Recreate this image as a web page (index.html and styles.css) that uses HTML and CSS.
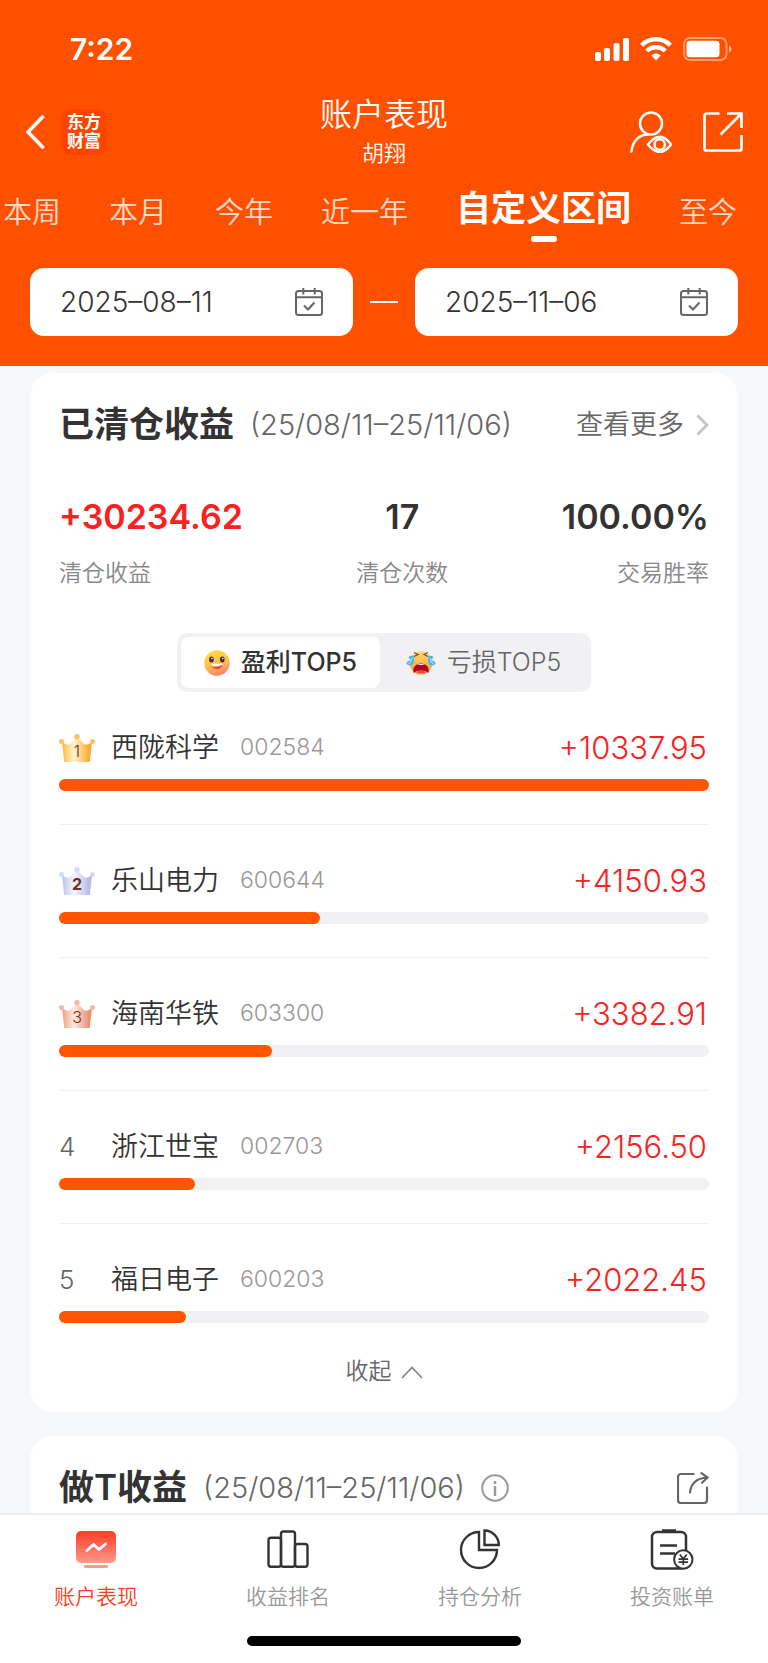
FILE: index.html
```
<!DOCTYPE html>
<html lang="zh-CN">
<head>
    <meta charset="UTF-8">
    <meta name="viewport" content="width=device-width, initial-scale=1.0">
    <title>账户表现</title>
    <link rel="stylesheet" href="styles.css">
</head>
<body>
    <div class="app">
        <!-- Orange Header -->
        <header class="header">
            <div class="status-bar">
                <span class="time">7:22</span>
                <div class="status-icons">
                    <svg width="34" height="23" viewBox="0 0 34 23" fill="#fff">
                        <rect x="0" y="14" width="6" height="9" rx="2"/>
                        <rect x="9" y="10" width="6" height="13" rx="2"/>
                        <rect x="18.500" y="5" width="6" height="18" rx="2"/>
                        <rect x="28" y="0" width="6" height="23" rx="2"/>
                    </svg>
                    <svg width="32" height="24" viewBox="0 0 32 24" fill="none" stroke="#fff" stroke-width="4.400">
                        <path d="M1.600 8.200a20.500 20.500 0 0 1 28.800 0"/>
                        <path d="M6.800 14a13 13 0 0 1 18.400 0"/>
                        <path d="M11.200 18.600a6.600 6.600 0 0 1 9.600 0L16 23.400z" fill="#fff" stroke="none"/>
                    </svg>
                    <svg width="49" height="24" viewBox="0 0 49 24">
                        <rect x="1" y="1" width="42.500" height="22" rx="6" fill="none" stroke="#fff" stroke-opacity=".45" stroke-width="1.800"/>
                        <rect x="3.500" y="3.800" width="33" height="16.400" rx="3.500" fill="#fff"/>
                        <path d="M46 8.500c3.300 1 3.300 6 0 7z" fill="#fff" fill-opacity=".5"/>
                    </svg>
                </div>
            </div>

            <div class="nav-bar">
                <div class="nav-left">
                    <button class="icon-button" aria-label="返回">
                        <svg width="20" height="34" viewBox="0 0 20 34" fill="none" stroke="#fff" stroke-width="3.600" stroke-linecap="round" stroke-linejoin="round"><path d="M17.500 2L3 17l14.500 15"/></svg>
                    </button>
                    <span class="logo">东方<br>财富</span>
                </div>
                <div class="nav-title">
                    <h1>账户表现</h1>
                    <p>胡翔</p>
                </div>
                <div class="nav-right">
                    <button class="icon-button" aria-label="账户查看">
                        <svg width="42" height="42" viewBox="0 0 42 42" fill="none" stroke="#fff" stroke-width="2.500" stroke-linecap="round">
                            <circle cx="21" cy="12.500" r="11"/>
                            <path d="M1.500 40.500C2.500 30 9 23.500 18 23.400"/>
                            <path d="M18 33.500q12-15.500 23 0-11 15-23 0z" stroke-linejoin="round"/>
                            <circle cx="29.700" cy="33.500" r="5.200"/>
                        </svg>
                    </button>
                    <button class="icon-button" aria-label="分享">
                        <svg width="40" height="40" viewBox="0 0 40 40" fill="none" stroke="#fff" stroke-width="2.700">
                            <path d="M16.500 1.500H3.500a2 2 0 0 0-2 2V36.500a2 2 0 0 0 2 2H36.500a2 2 0 0 0 2-2V23"/>
                            <path d="M24 1.500h14.500V16M37.500 2.500L17.500 22.500"/>
                        </svg>
                    </button>
                </div>
            </div>

            <nav class="period-tabs">
                <button class="period">本周</button>
                <button class="period">本月</button>
                <button class="period">今年</button>
                <button class="period">近一年</button>
                <button class="period active">自定义区间</button>
                <button class="period">至今</button>
            </nav>

            <div class="date-range">
                <label class="date-box">
                    <input type="text" value="2025–08–11" aria-label="开始日期">
                    <svg width="28" height="28" viewBox="0 0 28 28" fill="none" stroke="#666" stroke-width="2">
                        <rect x="1" y="3" width="26" height="24" rx="2.500"/>
                        <path d="M1 9.300h26M8.300 0v6.500M19.700 0v6.500M9 17.500l4 4 6.500-7"/>
                    </svg>
                </label>
                <span class="range-line"></span>
                <label class="date-box">
                    <input type="text" value="2025–11–06" aria-label="结束日期">
                    <svg width="28" height="28" viewBox="0 0 28 28" fill="none" stroke="#666" stroke-width="2">
                        <rect x="1" y="3" width="26" height="24" rx="2.500"/>
                        <path d="M1 9.300h26M8.300 0v6.500M19.700 0v6.500M9 17.500l4 4 6.500-7"/>
                    </svg>
                </label>
            </div>
        </header>

        <main class="content">
            <!-- Closed Positions -->
            <section class="card">
                <div class="card-head">
                    <h2>已清仓收益</h2>
                    <span class="card-range">(25/08/11–25/11/06)</span>
                    <a class="more" href="#">查看更多
                        <svg width="13" height="22" viewBox="0 0 13 22" fill="none" stroke="#c4c4c4" stroke-width="2.800"><path d="M1.500 1.500L11 11l-9.500 9.500"/></svg>
                    </a>
                </div>

                <div class="stats">
                    <div class="stat">
                        <strong class="up">+30234.62</strong>
                        <span>清仓收益</span>
                    </div>
                    <div class="stat">
                        <strong>17</strong>
                        <span>清仓次数</span>
                    </div>
                    <div class="stat">
                        <strong>100.00%</strong>
                        <span>交易胜率</span>
                    </div>
                </div>

                <div class="switch">
                    <button class="switch-item selected">
                        <svg width="26" height="26" viewBox="0 0 26 26">
                            <defs>
                                <linearGradient id="smile" x1="0" y1="0" x2=".3" y2="1">
                                    <stop offset="0" stop-color="#ffe04a"/>
                                    <stop offset=".6" stop-color="#ffc04c"/>
                                    <stop offset="1" stop-color="#ff8a68"/>
                                </linearGradient>
                            </defs>
                            <circle cx="13" cy="13" r="12.700" fill="url(#smile)"/>
                            <ellipse cx="7.500" cy="9.500" rx="2.300" ry="2.900" fill="#4a2b36"/>
                            <ellipse cx="18.300" cy="9.500" rx="2.300" ry="2.900" fill="#4a2b36"/>
                            <circle cx="8" cy="8.500" r=".8" fill="#fff"/>
                            <circle cx="18.800" cy="8.500" r=".8" fill="#fff"/>
                            <path d="M7.500 13.500q5.500 1.400 11-.5-.3 6-5.300 6.200-5 0-5.700-5.700z" fill="#ea4b38"/>
                            <path d="M7.500 13.200q5.500 1.400 11-.4v2q-5 3-10.500.9z" fill="#fff"/>
                        </svg>
                        盈利TOP5
                    </button>
                    <button class="switch-item">
                        <svg width="30" height="26" viewBox="0 0 30 26">
                            <defs>
                                <linearGradient id="cry" x1="0" y1="0" x2="0" y2="1">
                                    <stop offset="0" stop-color="#ffd866"/>
                                    <stop offset="1" stop-color="#ee9a3c"/>
                                </linearGradient>
                            </defs>
                            <circle cx="15" cy="13" r="11.500" fill="url(#cry)"/>
                            <path d="M8 2.500l4 2-4 2M22 2.500l-4 2 4 2" fill="none" stroke="#70502f" stroke-width="1.300"/>
                            <path d="M7.500 23q-1.500-9 7.500-9.500 9 .5 7.500 9.500l-3-2h-9z" fill="#ad0820"/>
                            <path d="M11 15q4-2 8 0z" fill="#fff"/>
                            <path d="M10.500 22q4.500-4 9 0l-1 1h-7z" fill="#ee4258"/>
                            <path d="M7.500 6Q3 5 2.500 8q3 1 2 2.500-4.500.5-4 3.500 4 3 6.500 0 1.500-3 .5-8zM22.500 6Q27 5 27.500 8q-3 1-2 2.500 4.500.5 4 3.500-4 3-6.500 0-1.500-3-.5-8z" fill="#42b5f4"/>
                            <path d="M6 8q-.5 4-3.500 6M24 8q.5 4 3.500 6" fill="none" stroke="#a6e4ff" stroke-width="1.100"/>
                        </svg>
                        亏损TOP5
                    </button>
                </div>

                <ol class="ranking">
                    <li>
                        <div class="stock">
                            <span class="rank">
                                <svg width="36" height="28" viewBox="0 0 36 28">
                                    <defs>
                                        <linearGradient id="gold">
                                            <stop offset="0" stop-color="#fbb938"/>
                                            <stop offset=".4" stop-color="#fff2d4"/>
                                            <stop offset=".9" stop-color="#f9ad30"/>
                                        </linearGradient>
                                    </defs>
                                    <path d="M3 8q5 4 8 2l7-7 7 7q3 2 8-2l-2.200 20H5.200z" fill="url(#gold)"/>
                                    <g fill="#fcc35a"><circle cx="2.500" cy="7.500" r="2.500"/><circle cx="18" cy="2.800" r="2.700"/><circle cx="33.500" cy="7.500" r="2.500"/></g>
                                    <text x="18" y="23" class="crown-number">1</text>
                                </svg>
                            </span>
                            <span class="name">西陇科学</span>
                            <span class="code">002584</span>
                            <span class="profit">+10337.95</span>
                        </div>
                        <div class="bar"><div class="bar-fill" style="width: 100%"></div></div>
                    </li>
                    <li>
                        <div class="stock">
                            <span class="rank">
                                <svg width="36" height="28" viewBox="0 0 36 28">
                                    <defs>
                                        <linearGradient id="silver">
                                            <stop offset="0" stop-color="#b9c1ea"/>
                                            <stop offset=".4" stop-color="#f5f6fc"/>
                                            <stop offset=".9" stop-color="#b7bce9"/>
                                        </linearGradient>
                                    </defs>
                                    <path d="M3 8q5 4 8 2l7-7 7 7q3 2 8-2l-2.200 20H5.200z" fill="url(#silver)"/>
                                    <g fill="#d5d9f4"><circle cx="2.500" cy="7.500" r="2.500"/><circle cx="18" cy="2.800" r="2.700"/><circle cx="33.500" cy="7.500" r="2.500"/></g>
                                    <text x="18" y="23" class="crown-number bold">2</text>
                                </svg>
                            </span>
                            <span class="name">乐山电力</span>
                            <span class="code">600644</span>
                            <span class="profit">+4150.93</span>
                        </div>
                        <div class="bar"><div class="bar-fill" style="width: 40.2%"></div></div>
                    </li>
                    <li>
                        <div class="stock">
                            <span class="rank">
                                <svg width="36" height="28" viewBox="0 0 36 28">
                                    <defs>
                                        <linearGradient id="bronze">
                                            <stop offset="0" stop-color="#f0a083"/>
                                            <stop offset=".4" stop-color="#fdeae2"/>
                                            <stop offset=".9" stop-color="#ea9273"/>
                                        </linearGradient>
                                    </defs>
                                    <path d="M3 8q5 4 8 2l7-7 7 7q3 2 8-2l-2.200 20H5.200z" fill="url(#bronze)"/>
                                    <g fill="#f6b8a2"><circle cx="2.500" cy="7.500" r="2.500"/><circle cx="18" cy="2.800" r="2.700"/><circle cx="33.500" cy="7.500" r="2.500"/></g>
                                    <text x="18" y="23" class="crown-number">3</text>
                                </svg>
                            </span>
                            <span class="name">海南华铁</span>
                            <span class="code">603300</span>
                            <span class="profit">+3382.91</span>
                        </div>
                        <div class="bar"><div class="bar-fill" style="width: 32.7%"></div></div>
                    </li>
                    <li>
                        <div class="stock">
                            <span class="rank">4</span>
                            <span class="name">浙江世宝</span>
                            <span class="code">002703</span>
                            <span class="profit">+2156.50</span>
                        </div>
                        <div class="bar"><div class="bar-fill" style="width: 20.9%"></div></div>
                    </li>
                    <li>
                        <div class="stock">
                            <span class="rank">5</span>
                            <span class="name">福日电子</span>
                            <span class="code">600203</span>
                            <span class="profit">+2022.45</span>
                        </div>
                        <div class="bar"><div class="bar-fill" style="width: 19.6%"></div></div>
                    </li>
                </ol>

                <button class="collapse">收起
                    <svg width="22" height="13" viewBox="0 0 22 13" fill="none" stroke="#888" stroke-width="1.800"><path d="M1 12L11 1.500 21 12"/></svg>
                </button>
            </section>

            <!-- T Trading -->
            <section class="card">
                <div class="card-head">
                    <h2>做T收益</h2>
                    <span class="card-range">(25/08/11–25/11/06)</span>
                    <button class="icon-button" aria-label="说明">
                        <svg width="28" height="28" viewBox="0 0 28 28" fill="none" stroke="#999" stroke-width="2">
                            <circle cx="14" cy="14" r="12.800"/>
                            <path d="M14 12v10M14 7v3" stroke-width="2.400"/>
                        </svg>
                    </button>
                    <button class="icon-button share" aria-label="分享">
                        <svg width="32" height="32" viewBox="0 0 32 32" fill="none" stroke="#666" stroke-width="2.200" stroke-linecap="round">
                            <path d="M16.500 2H4a3 3 0 0 0-3 3V28a3 3 0 0 0 3 3H27a3 3 0 0 0 3-3V15.500"/>
                            <path d="M13 20.500Q14.500 6.500 30 5.500M24.500 1.200l6 4.300-5.500 5.200"/>
                        </svg>
                    </button>
                </div>
            </section>
        </main>

        <!-- Bottom Tab Bar -->
        <footer class="footer">
            <nav class="tab-bar">
                <a class="tab current" href="#">
                    <svg width="42" height="42" viewBox="0 0 42 42">
                        <defs>
                            <linearGradient id="screen" x1="0" y1="0" x2="0" y2="1">
                                <stop offset="0" stop-color="#ff3b23"/>
                                <stop offset="1" stop-color="#ff9a8c"/>
                            </linearGradient>
                        </defs>
                        <rect x="1" y="2" width="40" height="32" rx="5" fill="url(#screen)"/>
                        <rect x="9" y="36" width="24" height="3" rx="1" fill="#ff9a8c"/>
                        <path d="M12 21.500l6.500-6 5.500 5 6.500-5.500" fill="none" stroke="#fff" stroke-width="2.800" stroke-linecap="round" stroke-linejoin="round"/>
                    </svg>
                    账户表现
                </a>
                <a class="tab" href="#">
                    <svg width="42" height="42" viewBox="0 0 42 42" fill="none" stroke="#333" stroke-width="2.400">
                        <rect x="1.500" y="8.700" width="12.500" height="29" rx="2.500"/>
                        <rect x="14" y="2.500" width="14" height="35.200" rx="2.500"/>
                        <rect x="28" y="15" width="12.500" height="22.700" rx="2.500"/>
                    </svg>
                    收益排名
                </a>
                <a class="tab" href="#">
                    <svg width="42" height="42" viewBox="0 0 42 42" fill="none" stroke="#333" stroke-width="2.400">
                        <path d="M20 3a18 18 0 1 0 18 18h-18z"/>
                        <path d="M25.500 1.500V16h14.300A14.400 14.400 0 0 0 25.500 1.500z"/>
                    </svg>
                    持仓分析
                </a>
                <a class="tab" href="#">
                    <svg width="44" height="42" viewBox="0 0 44 42" fill="none" stroke="#333" stroke-width="2.500">
                        <rect x="2" y="3" width="34" height="36.500" rx="5"/>
                        <path d="M12 1.500h14M10 16.500h17M10 24.500h15"/>
                        <circle cx="33.300" cy="30.500" r="9.200" fill="#fff" stroke-width="2"/>
                        <path d="M29.800 25.500l3.500 4.300 3.500-4.300M33.300 30v6M28.500 30.200h9.600M28.500 33.200h9.600" stroke-width="1.700"/>
                    </svg>
                    投资账单
                </a>
            </nav>
            <div class="home-indicator"></div>
        </footer>
    </div>
</body>
</html>
```
FILE: styles.css
```
* {
    box-sizing: border-box;
}

body {
    margin: 0;
    font-family: Inter, 'Noto Sans CJK SC', sans-serif;
    font-weight: 350;
    line-height: 1.3;
    background-color: #f7f8fa;
    color: #333;
}

h1,
h2,
p {
    margin: 0;
    font-weight: inherit;
}

button,
input {
    font-family: inherit;
    font-weight: inherit;
    line-height: inherit;
    color: inherit;
    border: none;
    background: none;
    padding: 0;
}

a {
    color: inherit;
    text-decoration: none;
}

svg {
    display: block;
    flex-shrink: 0;
}

.app {
    display: flex;
    flex-direction: column;
    height: 100vh;
    overflow: hidden;
}

/* Header */
.header {
    flex-shrink: 0;
    padding-bottom: 30px;
    background-color: #ff5000;
    color: #fff;
}

.status-bar {
    display: flex;
    justify-content: space-between;
    align-items: center;
    height: 94px;
    padding: 4px 36px 0 70px;
}

.time {
    font-size: 30px;
    font-weight: 600;
}

.status-icons {
    display: flex;
    align-items: center;
    gap: 11px;
}

.nav-bar {
    display: grid;
    grid-template-columns: 1fr auto 1fr;
    align-items: center;
    height: 70px;
    padding: 0 25px;
}

.nav-left,
.nav-right {
    display: flex;
    align-items: center;
    gap: 16px;
}

.nav-right {
    justify-content: flex-end;
    gap: 31px;
}

.logo {
    width: 46px;
    padding: 4px 0;
    border-radius: 9px;
    background-color: #ff4400;
    font-size: 17px;
    font-weight: 700;
    line-height: 19px;
    text-align: center;
}

.nav-title {
    text-align: center;
}

.nav-title h1 {
    font-size: 32px;
    line-height: 42px;
}

.nav-title p {
    font-size: 22px;
    line-height: 34px;
}

/* Period tabs */
.period-tabs {
    display: flex;
    justify-content: center;
    align-items: center;
    gap: 48px;
    height: 98px;
    margin-bottom: 6px;
    padding-right: 28px;
}

.period {
    flex-shrink: 0;
    font-size: 29px;
    line-height: 40px;
    color: rgba(255, 255, 255, 0.8);
}

.period.active {
    padding-top: 4px;
    font-size: 35px;
    font-weight: 600;
    color: #fff;
}

.period.active::after {
    content: "";
    display: block;
    width: 26px;
    height: 6px;
    margin: 8px auto 0;
    border-radius: 3px;
    background-color: #fff;
}

/* Date inputs */
.date-range {
    display: flex;
    align-items: center;
    gap: 17px;
    padding: 0 30px;
}

.date-box {
    display: flex;
    flex: 1;
    align-items: center;
    min-width: 0;
    height: 68px;
    padding: 0 30px;
    border-radius: 14px;
    background-color: #fff;
    color: #333;
}

.date-box input {
    flex: 1;
    min-width: 0;
    font-size: 28px;
    outline: none;
}

.range-line {
    width: 28px;
    height: 2px;
    background-color: #fff;
}

/* Cards */
.content {
    display: flex;
    flex: 1;
    flex-direction: column;
    gap: 24px;
    min-height: 0;
    padding: 7px 30px 0;
    overflow: hidden;
}

.card {
    flex-shrink: 0;
    padding: 0 29px 22px;
    border-radius: 24px;
    background-color: #fff;
}

.card-head {
    display: flex;
    align-items: center;
    gap: 16px;
    height: 104px;
}

.card-head h2 {
    font-size: 35px;
    font-weight: 600;
}

.card-range {
    font-size: 29px;
    color: #666;
}

.more {
    display: flex;
    align-items: center;
    gap: 12px;
    margin-left: auto;
    font-size: 27px;
    color: #666;
}

.share {
    margin-left: auto;
}

/* Totals */
.stats {
    display: grid;
    grid-template-columns: auto auto auto;
    justify-content: space-between;
    margin: 18px 0 44px;
}

.stat {
    display: flex;
    flex-direction: column;
    gap: 18px;
    text-align: center;
}

.stat:first-child {
    text-align: left;
}

.stat:last-child {
    text-align: right;
}

.stat strong {
    font-size: 34px;
    font-weight: 600;
    line-height: 44px;
}

.stat span {
    font-size: 23px;
    line-height: 32px;
    color: #888;
}

.stat .up {
    color: #f92222;
}

/* Profit / loss switch */
.switch {
    display: flex;
    width: 414px;
    margin: 0 auto;
    padding: 4px;
    border-radius: 10px;
    background-color: #f1f1f4;
}

.switch-item {
    display: flex;
    flex: 1;
    justify-content: center;
    align-items: center;
    gap: 11px;
    height: 51px;
    border-radius: 8px;
    font-size: 25px;
    color: #666;
}

.switch-item.selected {
    flex: 0 0 49%;
    background-color: #fff;
    font-weight: 500;
    color: #333;
}

/* Stock ranking */
.ranking {
    margin: 0;
    padding: 0;
    list-style: none;
}

.ranking li {
    padding: 38px 0 33px;
    border-bottom: 1px solid #f1f1f4;
}

.ranking li:last-child {
    padding-bottom: 31px;
    border-bottom: none;
}

.stock {
    display: flex;
    align-items: center;
    height: 36px;
    margin-bottom: 13px;
    padding-right: 2px;
}

.rank {
    width: 52px;
    font-size: 26px;
    color: #666;
}

.crown-number {
    font-size: 16px;
    fill: #6b3020;
    text-anchor: middle;
}

.crown-number.bold {
    font-weight: 700;
}

.name {
    font-size: 27px;
}

.code {
    margin-left: 21px;
    font-size: 23px;
    color: #999;
}

.profit {
    margin-left: auto;
    font-size: 31px;
    color: #f92222;
}

.bar {
    height: 12px;
    border-radius: 6px;
    background-color: #f1f1f4;
}

.bar-fill {
    height: 12px;
    border-radius: 6px;
    background-color: #ff5500;
}

.collapse {
    display: flex;
    align-items: center;
    gap: 9px;
    height: 36px;
    margin: 0 auto;
    font-size: 23px;
    color: #666;
}

/* Bottom tab bar */
.footer {
    flex-shrink: 0;
    height: 150px;
    padding-top: 14px;
    border-top: 2px solid #eee;
    background-color: #fff;
}

.tab-bar {
    display: flex;
}

.tab {
    display: flex;
    flex: 1;
    flex-direction: column;
    align-items: center;
    gap: 10px;
    font-size: 21px;
    line-height: 32px;
    color: #999;
}

.tab.current {
    color: #ff3b23;
}

.home-indicator {
    width: 274px;
    height: 10px;
    margin: 23px auto 0;
    border-radius: 5px;
    background-color: #000;
}
```
